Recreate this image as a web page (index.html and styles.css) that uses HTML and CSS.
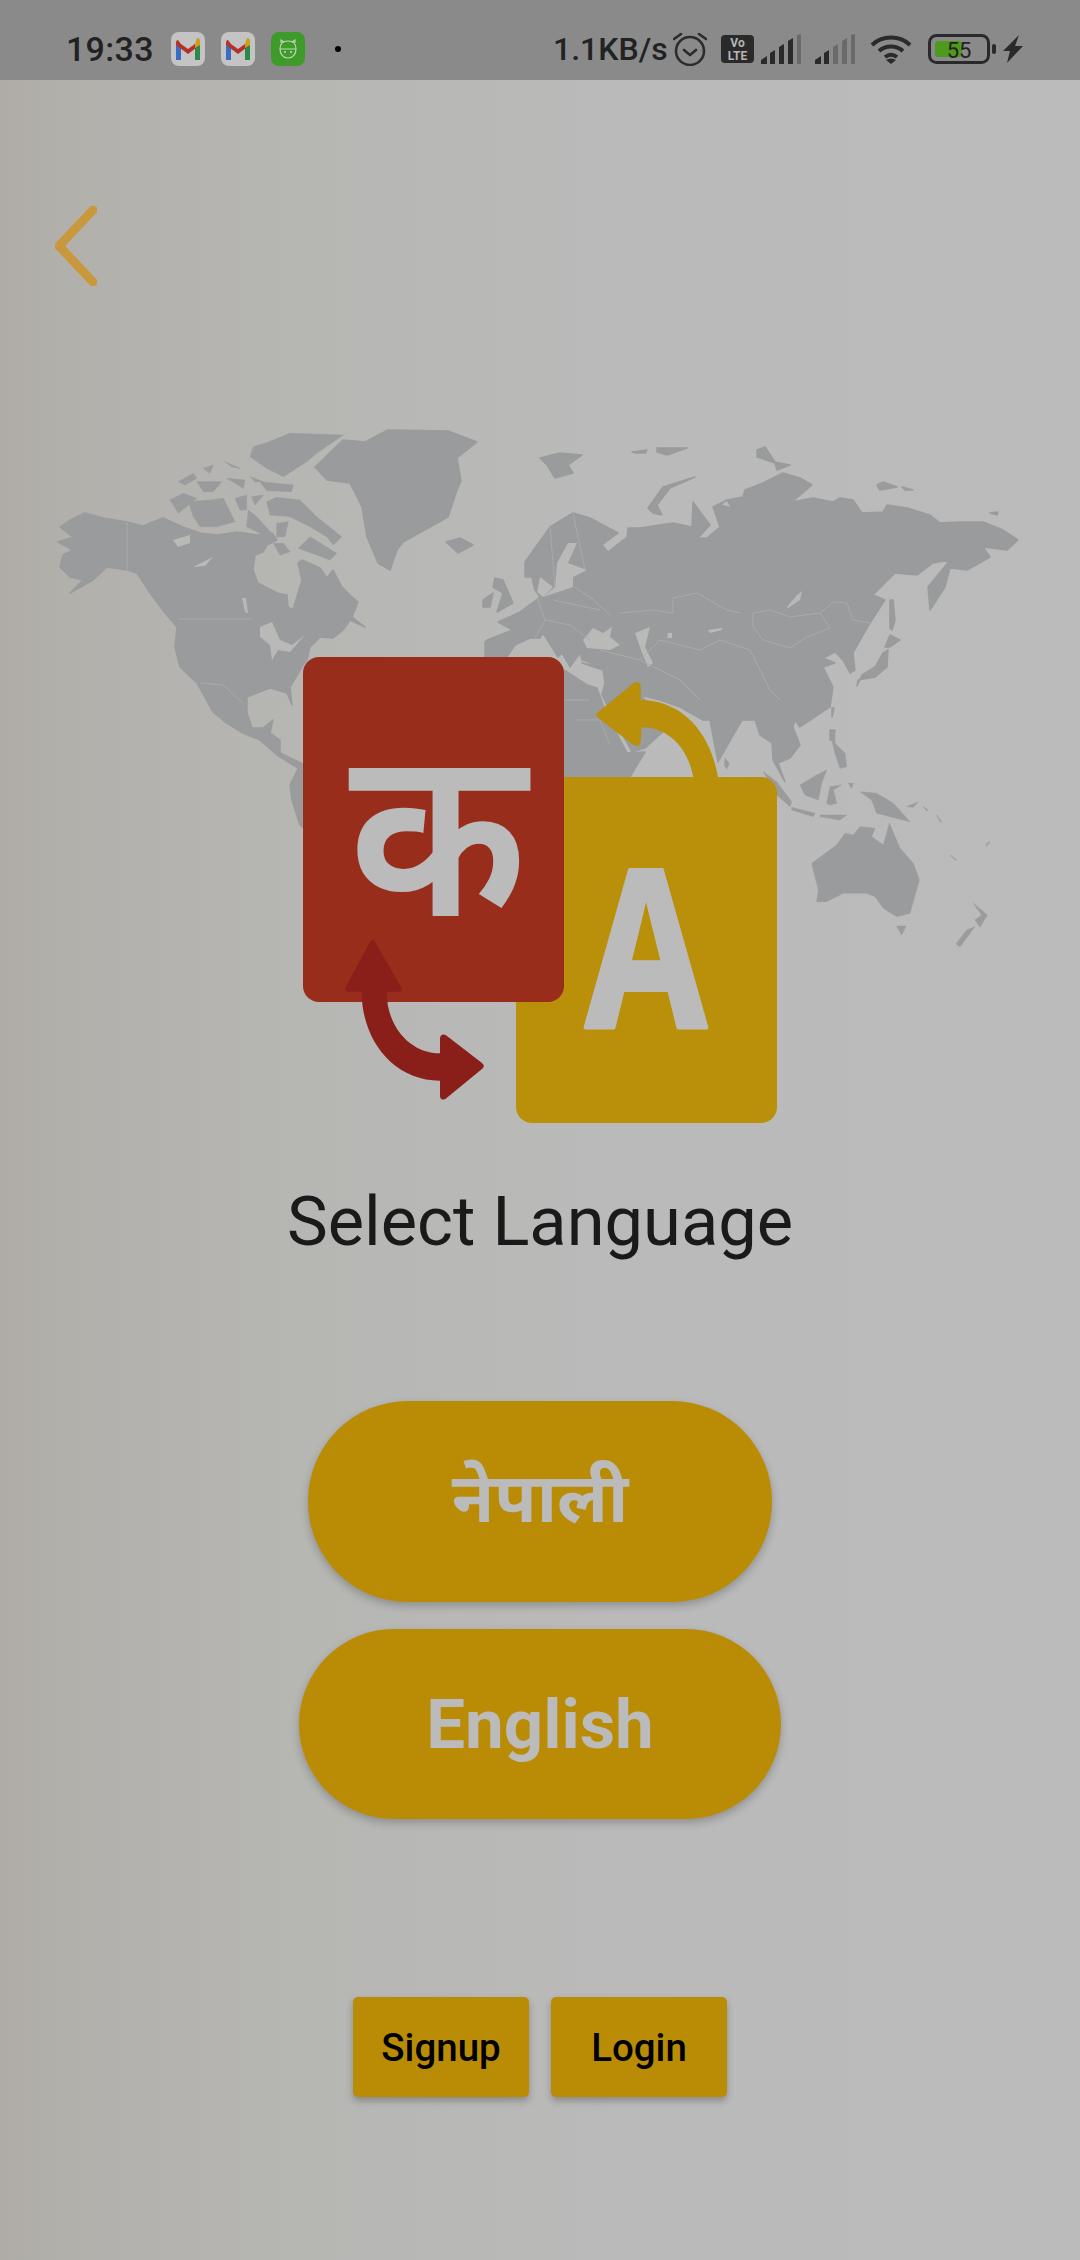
FILE: index.html
```html
<!DOCTYPE html>
<html lang="en">
<head>
<meta charset="utf-8">
<title>Select Language</title>
<link rel="stylesheet" href="styles.css">
</head>
<body>
<div class="page">
  <header class="status">
    <div class="status-left">
      <span class="time">19:33</span>
      <svg class="app" viewBox="0 0 34 34"><rect width="34" height="34" rx="8" class="app-light"/><path d="M5 13v15h5V15z" class="g-blue"/><path d="M24 15v13h5V13z" class="g-green"/><path d="M5 13l12 9 12-9v-3l-5 2-7 5-7-5-3-4q-2 0-2 3z" class="g-red"/><path d="M24 12l2-6q3 0 3 3v4l-5 3z" class="g-yellow"/></svg>
      <svg class="app" viewBox="0 0 34 34"><rect width="34" height="34" rx="8" class="app-light"/><path d="M5 13v15h5V15z" class="g-blue"/><path d="M24 15v13h5V13z" class="g-green"/><path d="M5 13l12 9 12-9v-3l-5 2-7 5-7-5-3-4q-2 0-2 3z" class="g-red"/><path d="M24 12l2-6q3 0 3 3v4l-5 3z" class="g-yellow"/></svg>
      <svg class="app" viewBox="0 0 34 34"><rect width="34" height="34" rx="8" class="app-green"/><g class="app-robot"><path d="M9 17c0-5 3-8 8-8s8 3 8 8-3 9-8 9-8-4-8-9z"/><path d="M10 11l0-3 3 2M24 11l0-3-3 2M9 17h16"/><path d="M13 20h2M19 20h2M14 19v2M20 19v2"/></g></svg>
      <span class="dot"></span>
    </div>
    <div class="status-right">
      <span class="speed">1.1KB/s</span>
      <svg class="ic-alarm" viewBox="0 0 34 34"><circle cx="17" cy="19" r="14" class="line"/><path d="M11 18l6 5 6-5M1 7l7-5M33 7l-7-5" class="line"/></svg>
      <svg class="ic-volte" viewBox="0 0 33 28"><rect width="33" height="28" rx="4" class="solid"/><text x="16.5" y="12" class="volte-t">Vo</text><text x="16.5" y="25" class="volte-t">LTE</text></svg>
      <svg class="ic-signal" viewBox="0 0 40 30"><path d="M0 30v-4l6-4v8zM9 30V19l5-3v14zM18 30V13l5-3v20z" class="solid"/><path d="M27 30V7l5-3v26z" class="solid"/><path d="M36 30V1l4-1v30z" class="solid-dim"/></svg>
      <svg class="ic-signal" viewBox="0 0 40 30"><path d="M0 30v-4l6-4v8zM9 30V19l5-3v14z" class="solid"/><path d="M18 30V13l5-3v20zM27 30V7l5-3v26zM36 30V1l4-1v30z" class="solid-dim"/></svg>
      <svg class="ic-wifi" viewBox="0 0 42 30"><path d="M2 11C12 1 30 1 40 11M9 17c7-6 17-6 24 0M15 23c4-3 8-3 12 0" class="wifi-l"/><path d="M21 30l-5-4q5-3 10 0z" class="solid"/></svg>
      <svg class="ic-batt" viewBox="0 0 68 30"><rect x="1.5" y="1.5" width="59" height="27" rx="7" class="batt-o"/><rect x="7" y="7" width="27" height="16" rx="3" class="batt-f"/><text x="31" y="24" class="batt-t">55</text><rect x="64" y="10" width="4" height="10" rx="2" class="solid"/></svg>
      <svg class="ic-bolt" viewBox="0 0 20 28"><path d="M16 0L0 16h7L4 28 20 11h-8z" class="solid"/></svg>
    </div>
  </header>

  <main class="content">
    <svg class="back" viewBox="0 0 42 80"><path d="M38 4L4 40l34 36" class="back-l"/></svg>

    <svg class="hero" viewBox="0 410 1080 720">
      <g class="land">
        <path d="M58 542L73 537 60 527 70 520 85 513 103 518 127 522 143 526 163 518 183 527 200 533 217 535 237 532 257 535 272 533 277 540 267 545 263 552 255 555 253 570 258 583 277 593 287 595 288 607 293 610 298 593 302 580 298 563 302 560 320 568 327 578 333 570 342 587 350 595 358 602 352 617 365 627 350 620 343 630 333 638 320 637 310 647 307 660 303 665 290 687 292 705 287 693 270 688 247 697 247 713 252 728 263 728 273 720 270 733 280 740 280 753 305 765 305 772 290 763 277 755 260 740 243 733 225 722 213 712 197 683 180 667 175 647 177 627 165 613 150 593 137 573 127 570 107 567 93 580 70 593 83 580 70 577 60 567 63 555 73 550z"/>
        <path d="M315 467L343 440 365 442 388 430 448 431 477 442 457 458 461 481 457 490 448 517 403 542 397 550 390 570 378 563 367 537 362 507 350 483 327 480z"/>
        <path d="M487 640L513 630 498 622 520 612 540 597 535 590 532 578 540 577 525 577 525 562 550 527 573 513 590 518 618 533 602 545 608 552 627 537 628 528 640 528 673 523 692 527 693 502 710 525 698 538 707 538 720 527 713 507 727 500 720 505 732 508 727 500 743 497 745 490 763 483 783 473 800 478 812 485 792 502 813 498 833 502 840 498 853 500 862 513 883 512 887 505 907 508 930 515 940 523 960 522 983 522 1003 530 1018 540 1007 550 983 547 990 557 967 570 950 568 945 587 930 610 928 587 950 560 933 563 917 575 895 573 873 595 885 600 870 623 853 653 855 670 850 673 843 660 835 652 823 658 835 663 823 667 833 687 830 707 800 727 795 720 793 727 800 745 790 758 778 763 785 782 773 760 772 743 760 735 755 720 742 720 718 762 710 720 703 720 680 707 660 700 640 695 650 705 665 730 645 748 632 752 620 730 602 695 605 683 603 670 582 663 605 667 582 660 580 653 577 657 570 667 562 653 558 657 543 633 540 638 530 638 515 645 505 660 485 660 485 642z"/>
        <path d="M564 670L587 685 597 688 605 710 615 730 627 753 645 752 625 785 560 785 560 670z"/>
        <path d="M300 765L306 765 306 830 300 825 292 800 290 785z"/>
        <path d="M495 578L503 580 513 603 497 612 503 593 493 587zM483 600L493 593 490 607 483 607zM446 542L460 538 473 545 458 553zM540 458L560 453 582 455 568 465 573 473 555 478 547 465z"/>
        <path d="M632 452L647 450 645 453 635 453zM657 448L687 448 667 455 657 452zM648 508L663 487 695 477 670 488 657 505 662 515 653 513zM757 450L765 447 775 462 790 465 777 470 775 463 757 457zM877 485L883 482 897 487 880 490zM902 487L913 490 905 490zM990 513L998 512 997 515z"/>
        <path d="M890 600L893 600 895 620 892 630 890 628zM885 647L890 635 900 640 890 647zM888 650L887 667 875 677 858 680 857 686 862 675 875 667 883 653zM832 708L834 708 832 717zM830 730L835 730 833 740 830 740z"/>
        <g transform="translate(50 420) scale(.33333)">
          <path d="M415 245L480 240 520 235 555 305 500 320 450 320 430 290zM360 240L400 220 440 235 385 280zM645 70L720 40 880 45 800 100 770 125 700 170 650 145 600 110 610 80zM630 185L730 195 725 215 650 212zM385 185L430 160 440 175 405 195zM440 185L515 185 490 215 460 215zM530 175L585 180 580 205zM525 125L570 145 545 140zM460 145L490 135 480 160zM600 170L640 185 615 185zM555 235L590 225 590 270 570 270zM605 230L640 225 615 255zM650 245L680 232 750 240 800 290 875 350 850 375 830 350 780 320 720 290 660 285zM595 270L620 290 665 340 640 345 590 320zM680 310L715 305 705 350 680 350zM670 370L700 370 720 395 690 405zM745 385L780 350 860 400 840 420 800 405z"/>
        </g>
        <g transform="translate(680 720) scale(.33333)">
          <path d="M450 35L465 30 465 70 495 100 500 140 480 145 465 100zM250 155L290 185 335 245 330 260 290 225zM335 262L405 280 400 290 335 270zM420 285L470 285 500 285 480 300 420 290zM360 195L410 165 440 150 425 190 415 240 375 225zM440 250L450 200 485 195 460 210 470 250 450 255zM540 215L590 220 640 250 690 305 630 290 590 280 575 240zM505 190L520 190 515 205zM680 260L715 245 700 262zM730 260L745 270 740 272zM770 285L785 305 780 305zM135 115L148 130 140 148 133 135z"/>
          <path d="M395 430L470 375 495 340 520 345 540 320 585 325 575 350 610 375 628 310 660 385 700 430 718 480 690 580 650 590 610 565 585 530 560 520 490 520 440 545 410 545 415 510zM650 618L678 618 665 645zM880 550L922 585 900 622 885 600 905 585zM885 620L840 680 828 672 860 630zM920 370L930 365 918 380zM810 405L830 420 825 420z"/>
        </g>
      </g>
      <g class="sea">
        <path d="M543 597L555 587 557 563 568 543 577 543 568 563 587 570 573 577 573 587zM540 577L553 587 543 597 537 592z"/>
        <path d="M583 640L593 628 603 633 612 627 610 637 620 645 610 650 587 648zM635 633L650 627 645 647 653 663 648 667 642 653zM668 633L672 633 672 638 667 638zM708 630L722 628 722 630 710 633zM802 591L800 600 788 608 787 607 797 595z"/>
        <path d="M260 627L272 622 280 640 292 645 305 635 290 652 278 650 272 660 270 645 260 637zM173 540L190 535 190 543 178 547zM193 567L213 557 205 566zM242 598L246 598 248 613 245 612z"/>
      </g>
      <path class="border" d="M178 619H252M127 522V570M200 683L223 685 243 703M620 613L653 610 673 613 673 598 697 593 727 610 740 613M753 613L770 610 790 617 820 613 830 628 807 637 790 648 763 640 753 627 753 613M820 613L833 602 847 603 853 620 870 623M537 597L545 620 570 625 590 640M553 600L600 610M575 587L590 597 610 615M545 620L535 638M600 650L640 660 680 680 700 700M640 660L660 640 700 650 720 640 750 650 770 690 780 700M564 700L590 700M575 720L600 720 610 745M550 527L555 587M573 513L585 570"/>

      <rect x="516" y="777" width="261" height="346" rx="16" class="card-gold"/>
      <rect x="303" y="657" width="261" height="345" rx="16" class="card-red"/>
      <g transform="translate(280 640) scale(.33333)">
        <path d="M952 218L1062 128Q1080 120 1082 140L1082 180C1200 180 1290 270 1314 412L1240 412C1225 330 1170 262 1085 262L1082 305Q1078 325 1060 315L952 232Q945 225 952 218Z" class="card-gold"/>
        <path d="M282 900L365 1045Q368 1055 358 1055L320 1055C320 1160 390 1240 480 1240L480 1195Q482 1180 497 1185L605 1268Q618 1278 605 1288L497 1376Q480 1385 480 1365L480 1322C340 1322 245 1200 245 1055L205 1055Q192 1055 198 1040L270 905Q282 895 290 905Z" class="arrow-red"/>
      </g>
      <text transform="translate(438 916) scale(.93 1)" class="ka">क</text>
      <text transform="translate(646 1027) scale(.8 1)" class="big-a">A</text>
    </svg>

    <h1 class="title">Select Language</h1>

    <button class="lang lang-ne">नेपाली</button>
    <button class="lang lang-en">English</button>

    <div class="auth">
      <button class="auth-btn">Signup</button>
      <button class="auth-btn">Login</button>
    </div>
  </main>
</div>
</body>
</html>
```
FILE: styles.css
```css
* { box-sizing: border-box; }
html, body { margin: 0; padding: 0; }
body { font-family: Roboto, "Noto Sans", "Noto Sans Devanagari", sans-serif; }
.page {
  width: 1080px;
  height: 2260px;
  overflow: hidden;
  background: linear-gradient(90deg, #afaca6 0, #b2b0ab 60px, #b6b6b3 300px, #bababa 620px, #bbbbbb 100%);
}
.status {
  height: 80px;
  background: #8a8a8a;
  display: flex;
  justify-content: space-between;
  padding: 32px 57px 0 66px;
  color: #222;
}
.status-left, .status-right { display: flex; align-items: center; height: 34px; }
.status-left { gap: 16px; }
.time { font-size: 34px; font-weight: 500; line-height: 34px; letter-spacing: .3px; margin-right: 1px; }
.app { width: 34px; height: 34px; display: block; }
.app-light { fill: #c4c4c4; }
.app-green { fill: #3f9a2c; }
.app-robot { fill: none; stroke: #bcd9b4; stroke-width: 1.2; }
.g-blue { fill: #3b6cc4; }
.g-green { fill: #2a8a48; }
.g-red { fill: #b5322a; }
.g-yellow { fill: #c9a118; }
.dot { width: 6px; height: 6px; border-radius: 50%; background: #000; margin-left: 14px; }
.speed { font-size: 32px; font-weight: 500; line-height: 34px; width: 111px; white-space: nowrap; margin-right: 9px; }
.line { fill: none; stroke: #2c2c2c; stroke-width: 2.6; stroke-linecap: round; stroke-linejoin: round; }
.solid { fill: #2a2a2a; }
.solid-dim { fill: #6a6a6a; }
.ic-alarm { width: 34px; height: 34px; margin-right: 14px; display: block; }
.ic-volte { width: 33px; height: 28px; margin-right: 7px; display: block; }
.volte-t { fill: #b5b5b5; font-size: 12px; font-weight: 700; text-anchor: middle; font-family: Roboto, sans-serif; }
.ic-signal { width: 40px; height: 30px; margin-right: 14px; display: block; }
.ic-wifi { width: 42px; height: 30px; margin-left: 1px; margin-right: 16px; display: block; }
.wifi-l { fill: none; stroke: #2a2a2a; stroke-width: 4; }
.ic-batt { width: 68px; height: 30px; margin-right: 7px; display: block; }
.batt-o { fill: none; stroke: #2a2a2a; stroke-width: 3; }
.batt-f { fill: #4e9a1e; }
.batt-t { fill: #222; font-size: 22px; text-anchor: middle; font-family: Roboto, sans-serif; }
.ic-bolt { width: 20px; height: 28px; display: block; }
.content { display: flex; flex-direction: column; align-items: center; }
.back { width: 42px; height: 80px; margin-top: 126px; align-self: flex-start; margin-left: 55px; display: block; }
.back-l { fill: none; stroke: #c9983c; stroke-width: 9; stroke-linecap: round; stroke-linejoin: round; }
.hero { width: 1080px; height: 720px; margin-top: 124px; display: block; flex: none; }
.land { fill: #999b9d; stroke: #999b9d; stroke-width: 1.5; stroke-linejoin: round; }
.sea { fill: #b9b9b8; }
.border { fill: none; stroke: #a8aaac; stroke-width: 1; }
.card-red { fill: #982d1c; }
.card-gold { fill: #ba8f0a; }
.arrow-red { fill: #8a1f1a; }
.ka { fill: #bbbbbb; font-size: 238px; font-weight: 600; text-anchor: middle; font-family: "Noto Sans Devanagari", "Noto Sans", sans-serif; }
.big-a { fill: #bbbbbb; stroke: #bbbbbb; stroke-width: 4; stroke-linejoin: round; font-size: 220px; font-weight: 700; text-anchor: middle; font-family: "Open Sans", sans-serif; }
.title { margin: 52px 0 0; font-size: 68.6px; font-weight: 400; line-height: 80px; color: #1a1a1a; }
.lang {
  border: 0;
  background: #ba8c05;
  color: #bbbbbb;
  font-family: inherit;
  font-weight: 700;
  font-size: 69px;
  box-shadow: 0 4px 8px rgba(0,0,0,.22);
  display: block;
  padding: 0;
}
.lang-ne { width: 464px; height: 201px; border-radius: 100px; margin-top: 139px; padding-bottom: 14px; }
.lang-en { width: 482px; height: 190px; border-radius: 95px; margin-top: 27px; }
.auth { display: flex; gap: 22px; margin-top: 178px; }
.auth-btn {
  width: 176px;
  height: 100px;
  border: 0;
  border-radius: 5px;
  background: #ba8c05;
  color: #000;
  font-family: inherit;
  font-weight: 500;
  font-size: 38.5px;
  box-shadow: 0 4px 7px rgba(0,0,0,.25);
  padding: 0;
}
```
